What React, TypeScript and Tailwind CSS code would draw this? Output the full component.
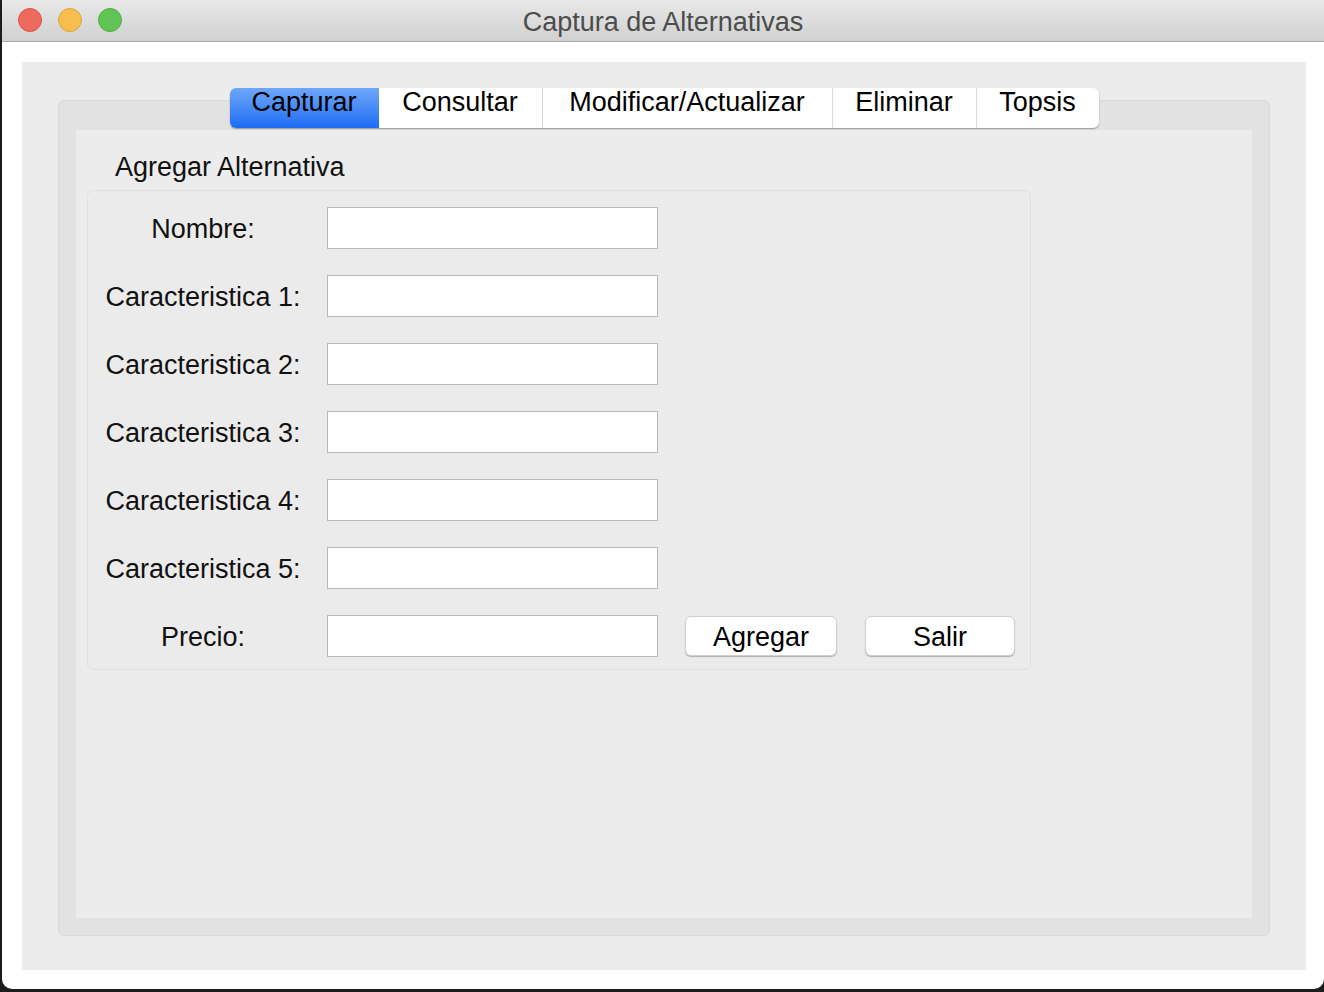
import React from "react";

const tabs = [
  { label: "Capturar", w: "w-[149px]" },
  { label: "Consultar", w: "w-[163px]" },
  { label: "Modificar/Actualizar", w: "w-[290px]" },
  { label: "Eliminar", w: "w-[144px]" },
  { label: "Topsis", w: "w-[123px]" },
];

const fields = [
  "Nombre:",
  "Caracteristica 1:",
  "Caracteristica 2:",
  "Caracteristica 3:",
  "Caracteristica 4:",
  "Caracteristica 5:",
];

function Field({ label }: { label: string }) {
  return (
    <div className="flex items-center h-[42px]">
      <label className="w-[230px] pt-[2px] text-center text-[27px] leading-none text-[#111]">
        {label}
      </label>
      <input
        type="text"
        className="ml-[9px] w-[331px] h-[42px] bg-white border border-[#b9b9b9] outline-none px-2 text-[24px]"
      />
    </div>
  );
}

export default function App() {
  return (
    <div
      className="w-[1324px] h-[992px] bg-[#1c1c1e] overflow-hidden"
      style={{ fontFamily: '"Liberation Sans", Arial, sans-serif' }}
    >
      <div className="ml-[2px] w-[1322px] h-[989px] bg-white rounded-b-[10px] overflow-hidden flex flex-col">
        {/* title bar */}
        <div className="relative h-[42px] shrink-0 flex items-center justify-center bg-gradient-to-b from-[#e8e8e8] to-[#d1d1d1] border-b border-[#ababab]">
          <div className="absolute left-[16px] top-[8px] flex gap-[16px]">
            <span className="w-[24px] h-[24px] rounded-full bg-[#ee6a5f] border border-[#d9544a]" />
            <span className="w-[24px] h-[24px] rounded-full bg-[#f6be4f] border border-[#dea537]" />
            <span className="w-[24px] h-[24px] rounded-full bg-[#61c454] border border-[#4fae43]" />
          </div>
          <span className="pt-[3px] text-[27px] text-[#4c4c4c] leading-none">
            Captura de Alternativas
          </span>
        </div>

        {/* content */}
        <div className="flex-1 pl-[20px] pt-[20px] pr-[18px] pb-[19px]">
          <div className="h-full bg-[#ececec] pt-[26px] px-[36px] pb-[34px] flex flex-col">
            {/* tabs */}
            <div className="relative z-10 flex justify-center">
              <div className="flex h-[40px] bg-white rounded-[6px] shadow-[0_1px_1.5px_rgba(0,0,0,0.35)] overflow-hidden">
                {tabs.map((t, i) => (
                  <div
                    key={t.label}
                    className={`${t.w} pt-[1px] text-center text-[27px] leading-[27px] text-black ${
                      i === 0
                        ? "bg-gradient-to-b from-[#6ea6f8] to-[#1a6cf4]"
                        : "border-l border-[#dadada]"
                    } ${i === 1 ? "border-l-0" : ""}`}
                  >
                    {t.label}
                  </div>
                ))}
              </div>
            </div>

            {/* tab frame */}
            <div className="-mt-[28px] flex-1 bg-[#e2e2e2] border border-[#dadada] rounded-[6px] pt-[29px] px-[17px] pb-[17px] flex flex-col">
              <div className="flex-1 bg-[#ececec] pl-[11px] pt-[22px]">
                <div className="pl-[28px] text-[27px] leading-[30px] text-[#111]">
                  Agregar Alternativa
                </div>
                <div className="mt-[8px] w-[944px] h-[480px] border border-[#e0e0e0] rounded-[6px] bg-[#ebebeb] pt-[16px] flex flex-col gap-[26px]">
                  {fields.map((f) => (
                    <Field key={f} label={f} />
                  ))}
                  <div className="flex items-center h-[42px]">
                    <label className="w-[230px] pt-[2px] text-center text-[27px] leading-none text-[#111]">
                      Precio:
                    </label>
                    <input
                      type="text"
                      className="ml-[9px] w-[331px] h-[42px] bg-white border border-[#b9b9b9] outline-none px-2 text-[24px]"
                    />
                    <button className="ml-[27px] w-[152px] h-[40px] pt-[2px] bg-white rounded-[6px] border border-[#d0d0d0] shadow-[0_1px_1px_rgba(0,0,0,0.25)] text-[27px] leading-none text-black">
                      Agregar
                    </button>
                    <button className="ml-[28px] w-[150px] h-[40px] pt-[2px] bg-white rounded-[6px] border border-[#d0d0d0] shadow-[0_1px_1px_rgba(0,0,0,0.25)] text-[27px] leading-none text-black">
                      Salir
                    </button>
                  </div>
                </div>
              </div>
            </div>
          </div>
        </div>
      </div>
    </div>
  );
}
